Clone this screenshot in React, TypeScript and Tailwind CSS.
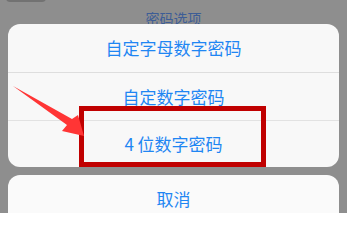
import React from "react";

const font = { fontFamily: '"Noto Sans CJK SC", "Noto Sans", sans-serif' };

export default function App() {
  return (
    <div className="relative w-[347px] h-[213px] overflow-hidden bg-[#8e8e8e]" style={font}>
      <div className="absolute left-[6px] top-[-10px] w-[40px] h-[12px] rounded-[4px] bg-[#727272]" />
      <div className="h-[24px] overflow-hidden flex justify-center">
        <span className="pt-[10px] text-[14px] leading-[16px] text-[#3d5d96]">密码选项</span>
      </div>
      <div className="mx-[8px] rounded-[12px] bg-[#f8f8f8] overflow-hidden">
        <div className="h-[49px] flex items-center justify-center border-b border-[#dedede] text-[17px] text-[#1f86f3]">
          自定字母数字密码
        </div>
        <div className="h-[48px] flex items-center justify-center border-b border-[#e2e2e2] text-[17px] text-[#1f86f3]">
          自定数字密码
        </div>
        <div className="h-[46px] flex items-center justify-center text-[17px] text-[#1f86f3]">
          4 位数字密码
        </div>
      </div>
      <div className="mt-[8px] mx-[8px] h-[60px] rounded-[12px] bg-[#fafafa] flex justify-center">
        <span className="pt-[12px] text-[17px] leading-[24px] text-[#1f86f3]">取消</span>
      </div>
      <div className="absolute left-[79px] top-[106px] w-[187px] h-[61px] border-[5px] border-[#c00000]" />
      <svg className="absolute left-0 top-0" width="347" height="213" viewBox="0 0 347 213">
        <polygon
          points="13,86 72,119 78,115 84,136 62,131 67,125"
          fill="#ff3535"
        />
      </svg>
    </div>
  );
}
